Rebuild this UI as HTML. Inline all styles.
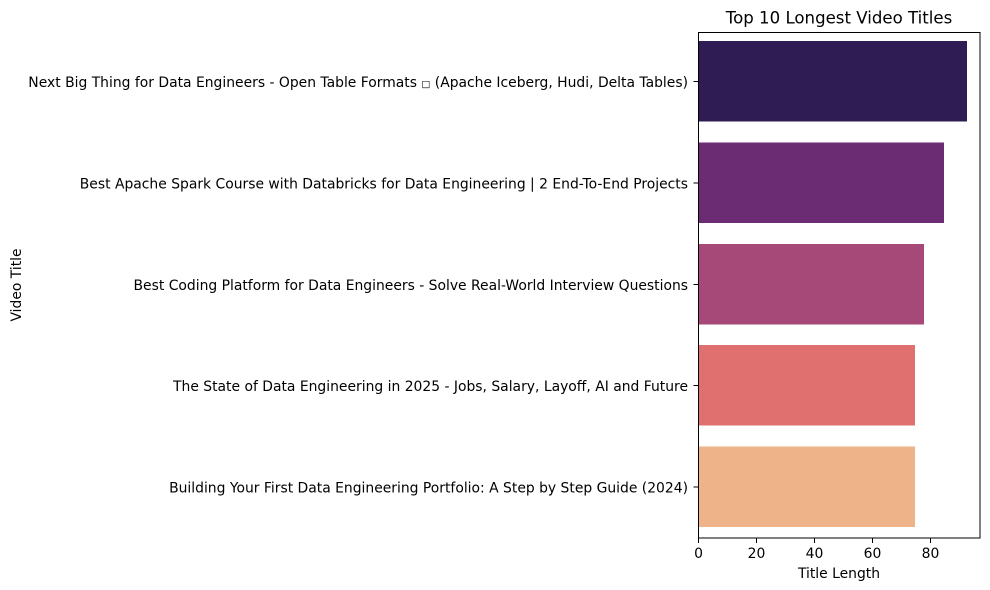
<!DOCTYPE html>
<html><head><meta charset="utf-8"><style>
html,body{margin:0;padding:0;background:#fff;width:990px;height:590px;overflow:hidden}
svg text{font-family:"DejaVu Sans","Liberation Sans",sans-serif;fill:#000}
</style></head><body>
<svg width="990" height="590" xmlns="http://www.w3.org/2000/svg">
<rect x="698.5" y="41" width="268.5" height="80.5" fill="#2f1c55"/>
<rect x="698.5" y="142.5" width="245.5" height="80.5" fill="#6b2c74"/>
<rect x="698.5" y="244" width="225.5" height="80.5" fill="#a64878"/>
<rect x="698.5" y="345" width="216.5" height="80.5" fill="#df706f"/>
<rect x="698.5" y="446.5" width="216.5" height="80.5" fill="#eeb389"/>
<rect x="698.5" y="32.5" width="281.5" height="505.5" fill="none" stroke="#000" stroke-width="1"/>
<g stroke="#000" stroke-width="1">
<line x1="693.5" x2="698.5" y1="81.5" y2="81.5"/>
<line x1="693.5" x2="698.5" y1="183" y2="183"/>
<line x1="693.5" x2="698.5" y1="284.5" y2="284.5"/>
<line x1="693.5" x2="698.5" y1="385.5" y2="385.5"/>
<line x1="693.5" x2="698.5" y1="487" y2="487"/>
<line x1="698.5" x2="698.5" y1="538" y2="543"/>
<line x1="756.5" x2="756.5" y1="538" y2="543"/>
<line x1="814.5" x2="814.5" y1="538" y2="543"/>
<line x1="872.5" x2="872.5" y1="538" y2="543"/>
<line x1="930.5" x2="930.5" y1="538" y2="543"/>
</g>
<g font-size="13.9" text-anchor="end">
<text x="688" y="87">Next Big Thing for Data Engineers - Open Table Formats <tspan font-size="9.5">□</tspan> (Apache Iceberg, Hudi, Delta Tables)</text>
<text x="688" y="188.5">Best Apache Spark Course with Databricks for Data Engineering | 2 End-To-End Projects</text>
<text x="688" y="290">Best Coding Platform for Data Engineers - Solve Real-World Interview Questions</text>
<text x="688" y="391">The State of Data Engineering in 2025 - Jobs, Salary, Layoff, AI and Future</text>
<text x="688" y="492.5">Building Your First Data Engineering Portfolio: A Step by Step Guide (2024)</text>
</g>
<g font-size="13.9" text-anchor="middle">
<text x="698.5" y="558">0</text>
<text x="756.5" y="558">20</text>
<text x="814.5" y="558">40</text>
<text x="872.5" y="558">60</text>
<text x="930.5" y="558">80</text>
<text x="839" y="578">Title Length</text>
<text x="839" y="23.5" font-size="16.6">Top 10 Longest Video Titles</text>
<text transform="translate(21,285) rotate(-90)">Video Title</text>
</g>
</svg>
</body></html>
